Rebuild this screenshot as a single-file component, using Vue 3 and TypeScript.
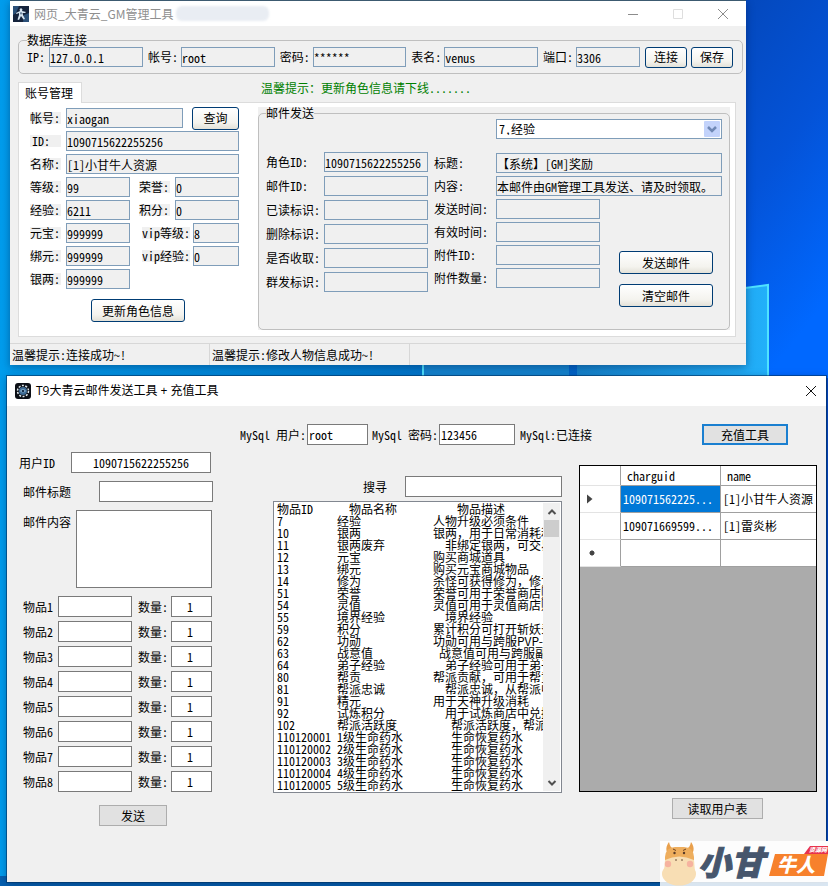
<script setup lang="ts">
import { reactive, ref } from 'vue'

interface Field {
  id: string
  label: string
  value: string
}
interface CatalogItem {
  id: string
  name: string
  desc: string
  indent: number
}

const db = reactive<Field[]>([
  { id: 'db-ip', label: 'IP:', value: '127.0.0.1' },
  { id: 'db-user', label: '帐号:', value: 'root' },
  { id: 'db-pass', label: '密码:', value: '******' },
  { id: 'db-name', label: '表名:', value: 'venus' },
  { id: 'db-port', label: '端口:', value: '3306' },
])

const account = ref('xiaogan')
const wide = reactive<Field[]>([
  { id: 'role-id', label: 'ID:', value: '1090715622255256' },
  { id: 'role-name', label: '名称:', value: '[1]小甘牛人资源' },
])
const pairs = reactive<Field[][]>([
  [
    { id: 'level', label: '等级:', value: '99' },
    { id: 'honor', label: '荣誉:', value: '0' },
  ],
  [
    { id: 'exp', label: '经验:', value: '6211' },
    { id: 'score', label: '积分:', value: '0' },
  ],
  [
    { id: 'gold', label: '元宝:', value: '999999' },
    { id: 'vip-level', label: 'vip等级:', value: '8' },
  ],
  [
    { id: 'bound-gold', label: '绑元:', value: '999999' },
    { id: 'vip-exp', label: 'vip经验:', value: '0' },
  ],
  [{ id: 'silver', label: '银两:', value: '999999' }],
])

const reward = ref('7,经验')
const mailLeft = reactive<Field[]>([
  { id: 'mail-role', label: '角色ID:', value: '1090715622255256' },
  { id: 'mail-id', label: '邮件ID:', value: '' },
  { id: 'mail-read', label: '已读标识:', value: '' },
  { id: 'mail-del', label: '删除标识:', value: '' },
  { id: 'mail-got', label: '是否收取:', value: '' },
  { id: 'mail-mass', label: '群发标识:', value: '' },
])
const mailRight = reactive<Field[]>([
  { id: 'mail-title', label: '标题:', value: '【系统】[GM]奖励' },
  { id: 'mail-body', label: '内容:', value: '本邮件由GM管理工具发送、请及时领取。' },
  { id: 'mail-sent', label: '发送时间:', value: '' },
  { id: 'mail-valid', label: '有效时间:', value: '' },
  { id: 'mail-att', label: '附件ID:', value: '' },
  { id: 'mail-count', label: '附件数量:', value: '' },
])

const mysqlUser = ref('root')
const mysqlPass = ref('123456')
const userId = ref('1090715622255256')
const subject = ref('')
const content = ref('')
const keyword = ref('')
const slots = reactive(Array.from({ length: 8 }, (_, i) => ({ no: i + 1, item: '', count: '1' })))

const catalog: CatalogItem[] = [
  { id: '7', name: '经验', desc: '人物升级必须条件', indent: 0 },
  { id: '10', name: '银两', desc: '银两，用于日常消耗和交易', indent: 0 },
  { id: '11', name: '银两废弃', desc: '非绑定银两，可交易', indent: 2 },
  { id: '12', name: '元宝', desc: '购买商城道具', indent: 0 },
  { id: '13', name: '绑元', desc: '购买元宝商城物品', indent: 0 },
  { id: '14', name: '修为', desc: '杀怪可获得修为，修为', indent: 0 },
  { id: '51', name: '荣誉', desc: '荣誉可用于荣誉商店购买', indent: 0 },
  { id: '54', name: '灵值', desc: '灵值可用于灵值商店购买', indent: 0 },
  { id: '55', name: '境界经验', desc: '境界经验', indent: 2 },
  { id: '59', name: '积分', desc: '累计积分可打开斩妖录', indent: 0 },
  { id: '62', name: '功勋', desc: '功勋可用与跨服PVP-工', indent: 0 },
  { id: '63', name: '战意值', desc: '战意值可用与跨服副本', indent: 1 },
  { id: '64', name: '弟子经验', desc: '弟子经验可用于弟子', indent: 2 },
  { id: '80', name: '帮贡', desc: '帮派贡献，可用于帮贡', indent: 0 },
  { id: '81', name: '帮派忠诚', desc: '帮派忠诚，从帮派中', indent: 2 },
  { id: '91', name: '精元', desc: '用于天神升级消耗', indent: 0 },
  { id: '92', name: '试炼积分', desc: '用于试炼商店中兑换', indent: 2 },
  { id: '102', name: '帮派活跃度', desc: '帮派活跃度，帮派', indent: 3 },
  { id: '110120001', name: '1级生命药水', desc: '生命恢复药水', indent: 3 },
  { id: '110120002', name: '2级生命药水', desc: '生命恢复药水', indent: 3 },
  { id: '110120003', name: '3级生命药水', desc: '生命恢复药水', indent: 3 },
  { id: '110120004', name: '4级生命药水', desc: '生命恢复药水', indent: 3 },
  { id: '110120005', name: '5级生命药水', desc: '生命恢复药水', indent: 3 },
]

const users = [
  { guid: '109071562225...', name: '[1]小甘牛人资源', selected: true },
  { guid: '109071669599...', name: '[1]雷炎彬', selected: false },
]
</script>

<template>
  <div class="desktop">
    <svg class="wallpaper" viewBox="0 0 828 886" preserveAspectRatio="none" aria-hidden="true">
      <defs>
        <linearGradient id="sky" x1="0" y1="0" x2="1" y2="0">
          <stop offset="0" stop-color="#009cec" />
          <stop offset="0.5" stop-color="#0278cc" />
          <stop offset="0.9" stop-color="#0350c4" />
          <stop offset="1" stop-color="#0448c4" />
        </linearGradient>
        <linearGradient id="side" x1="0" y1="0" x2="0.3" y2="1">
          <stop offset="0" stop-color="#0448bc" />
          <stop offset="0.5" stop-color="#0453d8" />
          <stop offset="1" stop-color="#0068ff" />
        </linearGradient>
        <linearGradient id="pane" x1="0" y1="0" x2="1" y2="0">
          <stop offset="0" stop-color="#1583cc" />
          <stop offset="1" stop-color="#22b0fa" />
        </linearGradient>
      </defs>
      <rect width="828" height="886" fill="url(#sky)" />
      <rect x="740" width="88" height="378" fill="url(#side)" />
      <path d="M423 330H569V380H423Z" fill="#1485d0" />
      <path d="M577 310L768 285V380H577Z" fill="url(#pane)" />
      <path d="M423 330V380M577 310L768 285V380" fill="none" stroke="#4fe3ff" stroke-width="2" />
      <rect y="876" width="828" height="10" fill="#0560b0" />
    </svg>

    <section class="window gm">
      <header class="title-bar">
        <svg class="app-icon" viewBox="0 0 16 16" aria-hidden="true">
          <rect width="16" height="16" fill="#15233c" />
          <path d="M0 0h6L3 7 0 9zM11 9l5-2v9h-6z" fill="#2b5078" />
          <path d="M8 2l1.500 1.500L9 5l4 1-1 1-2.500 0 .5 2 2 4-1.500.5L8 10l-2 4-1.500-.5L6 9V7L3.500 8 3 7l4-2-.5-1.500z" fill="#d6e4f0" />
          <path d="M8 6l1 1-1 2-1-2z" fill="#4d6785" />
        </svg>
        <h1>网页_大青云_GM管理工具</h1>
        <span class="smudge"></span>
        <div class="caption-buttons">
          <button type="button" aria-label="最小化"><svg viewBox="0 0 12 12"><path d="M1 6.500h10" /></svg></button>
          <button type="button" aria-label="最大化" class="faint"><svg viewBox="0 0 12 12"><path d="M1.500 1.500h9v9h-9z" /></svg></button>
          <button type="button" aria-label="关闭"><svg viewBox="0 0 12 12"><path d="M1 1l10 10M11 1L1 11" /></svg></button>
        </div>
      </header>

      <fieldset class="group db">
        <legend>数据库连接</legend>
        <div class="db-row">
          <div v-for="f in db" :key="f.id" class="db-field" :class="f.id">
            <label :for="f.id">{{ f.label }}</label>
            <input :id="f.id" v-model="f.value" type="text" />
          </div>
          <div class="db-actions">
            <button type="button" class="xp">连接</button>
            <button type="button" class="xp">保存</button>
          </div>
        </div>
      </fieldset>

      <div class="tab-row">
        <button type="button" class="tab">账号管理</button>
        <p class="tip">温馨提示：更新角色信息请下线.......</p>
      </div>

      <div class="panel">
        <form class="account" @submit.prevent>
          <div class="line">
            <label for="account">帐号:</label>
            <input id="account" v-model="account" type="text" class="mid" />
            <button type="button" class="xp query">查询</button>
          </div>
          <div v-for="f in wide" :key="f.id" class="line">
            <label :for="f.id">{{ f.label }}</label>
            <input :id="f.id" v-model="f.value" type="text" class="full" />
          </div>
          <div v-for="pair in pairs" :key="pair[0].id" class="line">
            <template v-for="(f, i) in pair" :key="f.id">
              <label :for="f.id" :class="{ second: i === 1, vip: f.label.startsWith('vip') }">{{ f.label }}</label>
              <input :id="f.id" v-model="f.value" type="text" :class="{ short: f.label.startsWith('vip') }" />
            </template>
          </div>
          <button type="button" class="xp large update">更新角色信息</button>
        </form>

        <div class="mail-box">
          <fieldset class="group mail">
            <legend>邮件发送</legend>
            <div class="combo">
              <select v-model="reward" aria-label="奖励物品">
                <option>7,经验</option>
                <option>10,银两</option>
                <option>12,元宝</option>
              </select>
              <svg viewBox="0 0 16 16" aria-hidden="true">
                <rect width="16" height="16" rx="1" fill="#c3d3fb" />
                <path d="M4 6l4 4 4-4" fill="none" stroke="#6f88b5" stroke-width="2.500" />
              </svg>
            </div>
            <div class="mail-grid">
              <div class="mail-left">
                <template v-for="f in mailLeft" :key="f.id">
                  <label :for="f.id">{{ f.label }}</label>
                  <input :id="f.id" v-model="f.value" type="text" />
                </template>
              </div>
              <div class="mail-right">
                <template v-for="(f, i) in mailRight" :key="f.id">
                  <label :for="f.id">{{ f.label }}</label>
                  <input :id="f.id" v-model="f.value" type="text" :class="{ span: i < 2 }" />
                </template>
                <div class="mail-actions">
                  <button type="button" class="xp large">发送邮件</button>
                  <button type="button" class="xp large">清空邮件</button>
                </div>
              </div>
            </div>
          </fieldset>
        </div>
      </div>

      <footer class="status">
        <span>温馨提示:连接成功~!</span>
        <span>温馨提示:修改人物信息成功~!</span>
        <span></span>
      </footer>
    </section>

    <section class="window t9">
      <header class="title-bar">
        <svg class="app-icon" viewBox="0 0 16 16" aria-hidden="true">
          <rect width="16" height="16" rx="3" fill="#0b0f16" />
          <circle cx="8" cy="8" r="5.500" fill="none" stroke="#dfe9ef" stroke-width="1.500" stroke-dasharray="2 1.450" />
          <circle cx="8" cy="8" r="4" fill="#3c6a94" />
          <path d="M5 8q3-4 6 0q-3 3-6 0z" fill="#8fb8d6" />
          <circle cx="8" cy="8" r="1.300" fill="#17304c" />
        </svg>
        <h2>T9大青云邮件发送工具 + 充值工具</h2>
        <div class="caption-buttons">
          <button type="button" aria-label="关闭"><svg viewBox="0 0 12 12"><path d="M1 1l10 10M11 1L1 11" /></svg></button>
        </div>
      </header>

      <div class="mysql">
        <label for="my-user">MySql 用户:</label>
        <input id="my-user" v-model="mysqlUser" type="text" class="user" />
        <label for="my-pass" class="next">MySql 密码:</label>
        <input id="my-pass" v-model="mysqlPass" type="text" class="pass" />
        <span class="state">MySql:已连接</span>
        <button type="button" class="flat focus">充值工具</button>
      </div>

      <main class="tool">
        <form class="compose" @submit.prevent>
          <div class="row">
            <label for="uid">用户ID</label>
            <input id="uid" v-model="userId" type="text" class="uid" />
          </div>
          <div class="row inset">
            <label for="subject">邮件标题</label>
            <input id="subject" v-model="subject" type="text" class="subject" />
          </div>
          <div class="row inset top">
            <label for="content">邮件内容</label>
            <textarea id="content" v-model="content"></textarea>
          </div>
          <div class="slots">
            <div v-for="s in slots" :key="s.no" class="slot">
              <label :for="'item' + s.no">物品{{ s.no }}</label>
              <input :id="'item' + s.no" v-model="s.item" type="text" />
              <label :for="'count' + s.no" class="count-label">数量:</label>
              <input :id="'count' + s.no" v-model="s.count" type="text" class="count" />
            </div>
          </div>
          <button type="submit" class="flat send">发送</button>
        </form>

        <div class="browse">
          <div class="search">
            <label for="keyword">搜寻</label>
            <input id="keyword" v-model="keyword" type="text" />
          </div>
          <div class="listbox">
            <ul role="listbox" aria-label="物品列表">
              <li class="head"><span>物品ID</span><span>物品名称</span><span>物品描述</span></li>
              <li v-for="c in catalog" :key="c.id" role="option">
                <span>{{ c.id }}</span>
                <span>{{ c.name }}</span>
                <span class="desc" :style="{ paddingLeft: c.indent * 6 + 'px' }">{{ c.desc }}</span>
              </li>
            </ul>
            <div class="scroll">
              <svg viewBox="0 0 10 10"><path d="M1.500 7L5 3.500 8.500 7" /></svg>
              <div class="thumb"></div>
              <svg viewBox="0 0 10 10" class="down"><path d="M1.500 3L5 6.500 8.500 3" /></svg>
            </div>
          </div>
        </div>

        <div class="accounts">
          <div class="grid-frame">
            <table>
              <thead>
                <tr><th class="marker"></th><th class="guid">charguid</th><th class="name">name</th></tr>
              </thead>
              <tbody>
                <tr v-for="u in users" :key="u.guid">
                  <td class="marker">
                    <svg v-if="u.selected" viewBox="0 0 6 10"><path d="M0 0.500L5.500 5 0 9.500z" /></svg>
                  </td>
                  <td :class="{ selected: u.selected }">{{ u.guid }}</td>
                  <td>{{ u.name }}</td>
                </tr>
                <tr>
                  <td class="marker new">
                    <svg viewBox="0 0 6 10"><circle cx="3" cy="5" r="2.200" /><path d="M3 2v6M0 5h6M1 3l4 4M5 3L1 7" class="star" /></svg>
                  </td>
                  <td></td>
                  <td></td>
                </tr>
              </tbody>
            </table>
          </div>
          <button type="button" class="flat load">读取用户表</button>
        </div>
      </main>
    </section>

    <svg class="brand" viewBox="0 0 168 45" role="img" aria-label="小甘牛人资源网">
      <rect width="168" height="45" fill="#ffffff" fill-opacity="0.85" />
      <rect width="168" height="41" fill="#fdfdfd" />
      <path d="M9 14C5 10 6 5 9 1c1 4 2 6 5 7h12c3-1 4-3 5-7 3 4 4 9 0 13z" fill="#e9a04c" />
      <ellipse cx="19" cy="33" rx="17" ry="11.500" fill="#f8deb4" />
      <path d="M5 25V16Q6 6 15 6H24Q33 6 34 16V25Z" fill="#eeae5e" />
      <path d="M5 19q14-7 29 0l1 12H4z" fill="#f8deb4" />
      <path d="M13 8l3 1.500M26 8l-3 1.500" stroke="#6b4325" stroke-width="1" />
      <g fill="#583b28">
        <circle cx="14.500" cy="12" r="1.200" /><circle cx="24" cy="12" r="1.200" />
        <circle cx="16" cy="19" r="0.800" /><circle cx="22" cy="19" r="0.800" />
      </g>
      <circle cx="8" cy="23" r="3.200" fill="#f6b3a0" />
      <circle cx="30" cy="23" r="3.200" fill="#f6b3a0" />
      <text x="38" y="34" class="brand-main">小甘</text>
      <path d="M115 13H168L164 35H109Z" fill="#f7812c" />
      <text x="117" y="31" class="brand-sub">牛人</text>
      <path d="M150 5H168V13H144Z" fill="#e8324c" />
      <text x="149" y="11" class="brand-tag">资源网</text>
    </svg>
  </div>
</template>

<style>
body {
  margin: 0;
}
</style>

<style scoped>
.desktop {
  position: relative;
  display: flex;
  flex-direction: column;
  box-sizing: border-box;
  min-height: 100vh;
  padding: 1px 2px 4px 7px;
  overflow: hidden;
  font-family: 'Noto Sans CJK SC', sans-serif;
  font-size: 12px;
  line-height: 12px;
  color: #000;
  font-feature-settings: 'hwid';
}
.desktop *,
.desktop *::before {
  box-sizing: border-box;
}
.wallpaper {
  position: absolute;
  inset: 0;
  width: 100%;
  height: 100%;
}
.window {
  position: relative;
  background: #f0f0f0;
  box-shadow: 0 0 0 1px rgba(0, 50, 100, 0.6), 0 2px 8px rgba(0, 20, 60, 0.4);
}
.gm {
  margin: 0 80px 0 3px;
  box-shadow: 0 -1px 0 #3c5a70, 0 2px 8px rgba(0, 20, 60, 0.4);
}
.t9 {
  flex: 1;
  margin-top: 11px;
}
input,
textarea,
select,
button {
  margin: 0;
  font: inherit;
  font-feature-settings: inherit;
  color: inherit;
  outline: none;
}
label,
button {
  white-space: nowrap;
}
h1,
h2,
p,
ul {
  margin: 0;
  padding: 0;
}

/* title bars */
.title-bar {
  display: flex;
  align-items: center;
  background: #fff;
  font-feature-settings: normal;
}
.title-bar h1,
.title-bar h2 {
  font-size: 12px;
  font-weight: 400;
  white-space: nowrap;
}
.title-bar h2 {
  font-family: 'Open Sans', 'Noto Sans CJK SC', sans-serif;
}
.gm .title-bar {
  height: 25px;
  padding-left: 3px;
}
.gm h1 {
  color: #8f8f8f;
}
.t9 .title-bar {
  height: 30px;
  padding-left: 8px;
}
.app-icon {
  width: 16px;
  height: 16px;
  margin-right: 5px;
}
.smudge {
  width: 93px;
  height: 15px;
  margin-left: 3px;
  border-radius: 6px;
  background: #e9edf3;
  filter: blur(1px);
}
.caption-buttons {
  display: flex;
  gap: 33px;
  margin-left: auto;
  padding-right: 17px;
}
.t9 .caption-buttons {
  padding-right: 9px;
}
.caption-buttons button {
  display: flex;
  padding: 0;
  border: 0;
  background: none;
}
.caption-buttons svg {
  width: 12px;
  height: 12px;
  fill: none;
  stroke: #8c8c8c;
}
.caption-buttons .faint svg {
  stroke: #dedede;
}
.t9 .caption-buttons svg {
  stroke: #111;
}

/* management window */
.group {
  min-width: 0;
  margin: 0;
  border: 1px solid #bfbfbf;
  border-radius: 5px;
}
.group legend {
  padding: 0;
  line-height: 12px;
}
.gm input {
  width: 64px;
  height: 20px;
  padding: 0;
  border: 1px solid #7f9db9;
  background: #f0f0f0;
}
.xp {
  height: 21px;
  padding: 0;
  border: 1px solid #003c74;
  border-radius: 3px;
  background: linear-gradient(#fff, #f4f3ee 70%, #e3e1d8);
}
.xp.large {
  width: 94px;
  height: 23px;
}
.db {
  margin: 8px 3px 0 8px;
  padding: 0 9px 5px 8px;
}
.db-row {
  display: flex;
  align-items: center;
  gap: 5px;
  height: 22px;
}
.db-field {
  display: flex;
  align-items: center;
  flex: 94 1 0;
}
.db-field label {
  flex: none;
  width: 33px;
}
.db-field input {
  flex: 1;
  min-width: 0;
}
.db-field.db-ip label {
  width: 22px;
}
.db-field.db-ip {
  flex: none;
  width: 116px;
}
.db-field.db-port {
  flex: none;
  width: 97px;
}
.db-actions {
  display: flex;
  gap: 4px;
}
.db-actions .xp {
  width: 42px;
}
.tab-row {
  display: grid;
  grid-template-columns: 243px 1fr;
  align-items: start;
  margin: 8px 10px 0 8px;
}
.tab {
  position: relative;
  z-index: 1;
  justify-self: start;
  height: 21px;
  margin-bottom: -1px;
  padding: 0 8px 0 6px;
  border: 1px solid #dcdcdc;
  border-bottom: 0;
  background: #fff;
}
.tip {
  color: #008000;
}
.panel {
  display: grid;
  grid-template-columns: 209px 1fr;
  column-gap: 19px;
  margin: 0 10px 0 8px;
  padding: 4px 5px 6px 11px;
  border: 1px solid #dcdcdc;
  background: #fff;
}
.account {
  display: grid;
  align-content: start;
  gap: 3px;
  padding-top: 1px;
}
.line {
  display: flex;
  align-items: center;
  height: 20px;
}
.line label {
  width: 31px;
  margin-right: 5px;
  background: #f0f0f0;
}
.line label[for='role-id'] {
  padding-left: 2px;
}
.line label.second {
  margin-left: 9px;
}
.line label.second.vip {
  width: 48px;
  margin-right: 3px;
  margin-left: 12px;
}
.line input.short {
  width: 46px;
}
.line input.mid {
  width: 117px;
}
.line input.full {
  width: 173px;
}
.query {
  width: 47px;
  height: 23px;
  margin-left: auto;
}
.update {
  margin: 7px 0 0 61px;
}
.mail-box {
  background: #f0f0f0;
}
.mail {
  padding: 0 7px 22px 7px;
}
.combo {
  position: relative;
  width: 226px;
  margin-left: auto;
}
.combo select {
  display: block;
  width: 100%;
  height: 20px;
  padding: 0 2px;
  appearance: none;
  border: 1px solid #7f9db9;
  border-radius: 0;
  background: #fff;
}
.combo svg {
  position: absolute;
  top: 2px;
  right: 2px;
  width: 16px;
  height: 16px;
  pointer-events: none;
}
.mail-grid {
  display: grid;
  grid-template-columns: 162px 1fr;
  column-gap: 6px;
  margin-top: 13px;
}
.mail-left {
  display: grid;
  grid-template-columns: 58px 104px;
  align-content: start;
  align-items: center;
  row-gap: 4px;
}
.mail-left input,
.mail-right input {
  width: 100%;
}
.mail-right {
  display: grid;
  grid-template-columns: 62px 104px 1fr;
  grid-template-rows: repeat(6, 20px) auto;
  align-items: center;
  row-gap: 3px;
  padding-top: 1px;
}
.mail-right label {
  grid-column: 1;
}
.mail-right .span {
  grid-column: 2 / 4;
}
.mail-actions {
  display: grid;
  grid-area: 3 / 3 / 8 / 4;
  justify-content: end;
  gap: 10px;
  padding: 52px 9px 0 0;
}
.status {
  display: grid;
  grid-template-columns: 200px 200px 1fr;
  height: 22px;
  margin-top: 6px;
  border-top: 1px solid #d7d7d7;
}
.status span {
  display: flex;
  align-items: center;
  padding-left: 2px;
  border-right: 1px solid #d7d7d7;
  white-space: nowrap;
}
.status span:last-child {
  border-right: 0;
}

/* mail and recharge window */
.t9 input,
.t9 textarea {
  height: 21px;
  padding: 0 1px;
  border: 1px solid #7a7a7a;
  border-radius: 0;
  background: #fff;
}
.flat {
  height: 21px;
  padding: 0;
  border: 1px solid #adadad;
  background: #e1e1e1;
}
.flat.focus {
  width: 86px;
  margin-left: auto;
  border: 2px solid #1a7fd0;
}
.mysql {
  display: flex;
  align-items: center;
  padding: 17px 38px 0 233px;
  height: 40px;
}
.mysql label {
  width: 67px;
}
.mysql .next {
  margin-left: 4px;
}
.mysql .user {
  width: 61px;
}
.mysql .pass {
  width: 76px;
}
.mysql .state {
  margin-left: 5px;
}
.tool {
  display: grid;
  grid-template-columns: 194px 1fr 238px;
  column-gap: 17px;
  padding: 0 9px 0 12px;
}
.compose {
  display: flex;
  flex-direction: column;
  gap: 8px;
  padding-top: 6px;
}
.row {
  display: flex;
  align-items: center;
  justify-content: space-between;
}
.row.inset {
  padding-left: 4px;
}
.row.top {
  align-items: flex-start;
}
.row.top label {
  padding-top: 6px;
}
.t9 .uid {
  width: 140px;
  margin-right: 2px;
  text-align: center;
}
.subject {
  width: 114px;
}
.t9 textarea {
  width: 136px;
  height: 78px;
  margin-right: 1px;
  resize: none;
}
.slots {
  display: grid;
  gap: 4px;
  padding-left: 4px;
}
.slot {
  display: flex;
  align-items: center;
}
.slot label {
  width: 35px;
}
.slot input {
  width: 74px;
}
.slot .count-label {
  width: 33px;
  margin-left: 6px;
}
.t9 .slot .count {
  width: 41px;
  padding-right: 4px;
  text-align: center;
}
.send {
  width: 68px;
  margin: 5px 0 0 80px;
}
.browse {
  min-width: 0;
  padding: 30px 0 0 43px;
}
.search {
  display: flex;
  align-items: center;
  justify-content: flex-end;
  gap: 18px;
  margin-bottom: 4px;
}
.search input {
  width: 157px;
}
.listbox {
  display: flex;
  height: 292px;
  padding: 1px;
  border: 1px solid #828790;
  background: #fff;
}
.listbox ul {
  flex: 1;
  min-width: 0;
  padding-left: 2px;
  overflow-x: clip;
  list-style: none;
}
.listbox li {
  display: grid;
  grid-template-columns: 60px 96px 1fr;
  height: 12px;
  white-space: nowrap;
}
.listbox .desc {
  font-feature-settings: normal;
}
.listbox .head {
  grid-template-columns: 72px 108px 1fr;
}
.scroll {
  position: relative;
  display: flex;
  flex-direction: column;
  align-items: center;
  width: 17px;
  background: #f0f0f0;
}
.scroll svg {
  width: 10px;
  height: 10px;
  margin: 4px 0 3px;
  fill: none;
  stroke: #505050;
  stroke-width: 2;
}
.scroll .down {
  margin-top: auto;
}
.thumb {
  width: 15px;
  height: 17px;
  background: #cdcdcd;
}
.accounts {
  padding-top: 19px;
}
.grid-frame {
  height: 327px;
  border: 1px solid #000;
  background: #ababab;
}
.grid-frame table {
  width: 100%;
  border-collapse: separate;
  border-spacing: 0;
  table-layout: fixed;
  background: #fff;
}
.grid-frame th,
.grid-frame td {
  height: 27px;
  padding: 0 0 0 2px;
  border-right: 1px solid #a0a0a0;
  border-bottom: 1px solid #a0a0a0;
  font-weight: 400;
  text-align: left;
  white-space: nowrap;
}
.grid-frame th {
  height: 20px;
  padding-left: 6px;
}
.grid-frame th:last-child,
.grid-frame td:last-child {
  border-right: 0;
}
.grid-frame .marker {
  width: 41px;
  padding-left: 7px;
  border-bottom-color: #e3e3e3;
}
.grid-frame .new {
  padding-left: 9px;
}
.grid-frame .guid {
  width: 100px;
}
.grid-frame .selected {
  background: #0078d7;
  color: #fff;
}
.marker svg {
  display: block;
  width: 6px;
  height: 10px;
  fill: #444;
}
.marker .star {
  stroke: #444;
  stroke-width: 0.8;
}
.load {
  width: 91px;
  margin: 6px 0 0 93px;
}

/* site mark */
.brand {
  position: absolute;
  right: 0;
  bottom: 0;
  width: 168px;
  height: 45px;
}
.brand text {
  font-style: italic;
  font-weight: 900;
}
.brand-main {
  font-size: 33px;
  fill: #46566d;
  stroke: #46566d;
  stroke-width: 1;
}
.brand-sub {
  font-size: 19px;
  fill: #fff;
}
.brand-tag {
  font-size: 6px;
  fill: #fff;
}
</style>
